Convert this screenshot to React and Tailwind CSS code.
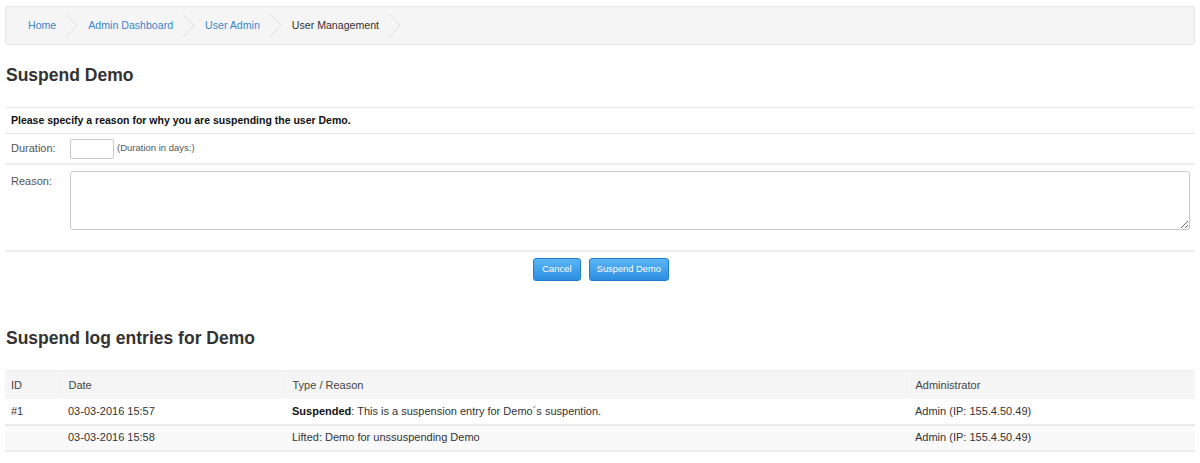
// Suspend user page — breadcrumb, suspend form and suspend log table.
const CRUMBS = [
  { label: 'Home', link: true },
  { label: 'Admin Dashboard', link: true },
  { label: 'User Admin', link: true },
  { label: 'User Management', link: false },
];

const LOG = [
  {
    id: '#1',
    date: '03-03-2016 15:57',
    type: 'Suspended',
    reason: 'This is a suspension entry for Demo´s suspention.',
    admin: 'Admin (IP: 155.4.50.49)',
  },
  {
    id: '',
    date: '03-03-2016 15:58',
    type: null,
    reason: 'Lifted: Demo for unssuspending Demo',
    admin: 'Admin (IP: 155.4.50.49)',
  },
];

function Chevron() {
  return (
    <svg viewBox="0 0 13 25" className="w-[13px] h-[25px] ml-[9px] mr-[10px]" fill="none" stroke="#dcdcdc" strokeWidth="1">
      <path d="M0.5 0.5L12 12.5L0.5 24.5" />
    </svg>
  );
}

export default function App() {
  return (
    <div className="bg-white text-[#333] px-[5px] pt-[6px] pb-[12px] font-['Liberation_Sans',Arial,sans-serif] w-[1200px]">
      {/* Breadcrumb */}
      <div className="h-[39px] bg-[#f5f5f5] border border-[#e3e3e3] rounded-[3px] flex items-center pl-[22px] text-[10.6px]">
        {CRUMBS.map((c) => (
          <div key={c.label} className="flex items-center">
            <span className={c.link ? 'text-[#3a87d0]' : 'text-[#333]'}>{c.label}</span>
            <Chevron />
          </div>
        ))}
      </div>

      <h2 className="mt-[19px] text-[17.5px] leading-[22px] font-bold pl-[1px]">Suspend Demo</h2>

      {/* Form */}
      <div className="mt-[21px] border-t border-[#e5e5e5]">
        <p className="px-[6px] h-[26px] flex items-center text-[10.5px] font-bold text-[#111] border-b border-[#e5e5e5]">
          Please specify a reason for why you are suspending the user Demo.
        </p>
        <div className="flex items-center h-[31px] border-b-2 border-[#eeeeee] text-[11px] text-[#555]">
          <span className="w-[65px] pl-[6px]">Duration:</span>
          <input className="w-[44px] h-[20px] border border-[#c8c8c8] rounded-[2px] bg-white" />
          <span className="ml-[3px] text-[9.5px] text-[#555]">(Duration in days:)</span>
        </div>
        <div className="flex pt-[6px] pb-[20px] border-b-2 border-[#eeeeee] text-[11px] text-[#555]">
          <span className="w-[65px] pl-[6px] pt-[2px]">Reason:</span>
          <textarea className="w-[1120px] h-[59px] border border-[#c8c8c8] rounded-[3px] bg-white" />
        </div>
        <div className="flex justify-center gap-[8px] pt-[6px] pl-[2px]">
          <button className="h-[23px] px-[8px] rounded-[3px] border border-[#1f7dcf] bg-gradient-to-b from-[#5bb4f5] to-[#2b8fe2] text-white text-[9.5px]">
            Cancel
          </button>
          <button className="h-[23px] px-[7px] rounded-[3px] border border-[#1f7dcf] bg-gradient-to-b from-[#5bb4f5] to-[#2b8fe2] text-white text-[9.3px]">
            Suspend Demo
          </button>
        </div>
      </div>

      <h2 className="mt-[46px] text-[17.5px] leading-[22px] font-bold pl-[1px]">Suspend log entries for Demo</h2>

      {/* Log table */}
      <table className="mt-[21px] w-full text-[11px] text-[#333] border-collapse">
        <thead>
          <tr className="bg-[#f5f5f5] border-t border-[#ececec] h-[28px] text-[#444]">
            <th className="font-normal text-left pl-[6px] w-[57px] border-r border-[#fafafa]">ID</th>
            <th className="font-normal text-left pl-[6px] w-[224px] border-r border-[#fafafa]">Date</th>
            <th className="font-normal text-left pl-[6px] w-[623px] border-r border-[#fafafa]">Type / Reason</th>
            <th className="font-normal text-left pl-[6px]">Administrator</th>
          </tr>
        </thead>
        <tbody>
          {LOG.map((r, i) => (
            <tr key={i} className={`h-[26px] border-b-2 border-[#ececec] ${i % 2 ? 'bg-[#f9f9f9]' : 'bg-white'}`}>
              <td className="pl-[6px]">{r.id}</td>
              <td className="pl-[6px]">{r.date}</td>
              <td className="pl-[6px]">
                {r.type && <b className="font-bold text-[#111]">{r.type}</b>}
                {r.type ? ': ' : ''}
                {r.reason}
              </td>
              <td className="pl-[6px]">{r.admin}</td>
            </tr>
          ))}
        </tbody>
      </table>
    </div>
  );
}
